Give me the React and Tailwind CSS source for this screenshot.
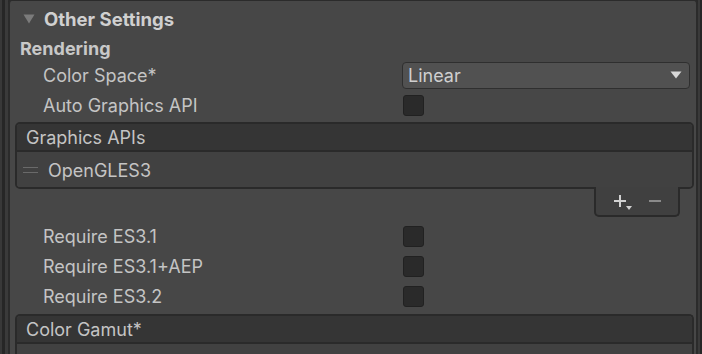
import React from "react";

function Checkbox() {
  return <div className="w-[21px] h-[21px] rounded-[3px] bg-[#2a2a2a] border border-[#212121]" />;
}

function Row({ label, children }) {
  return (
    <div className="h-[30px] flex items-center">
      <div className="w-[360px] pl-[33px] pt-[2px] text-[#c4c4c4]">{label}</div>
      <div className="flex-1 pl-[33px] pr-[6px]">{children}</div>
    </div>
  );
}

function ListHeader({ title }) {
  return (
    <div className="h-[28px] flex items-center px-[9px] pt-[2px] bg-[#353535] border-b-2 border-[#2a2a2a] text-[#c4c4c4]">
      {title}
    </div>
  );
}

export default function App() {
  return (
    <div
      className="w-[702px] h-[354px] flex overflow-hidden bg-[#2a2a2a] text-[18px] leading-none"
      style={{ fontFamily: "Inter, 'Noto Sans', sans-serif" }}
    >
      <div className="w-[2px] bg-[#383838]" />
      <div className="w-[3px] bg-[#262626]" />
      <div className="w-[3px] bg-[#3a3a3a]" />

      {/* Inspector panel */}
      <div className="flex-1 bg-[#474747] border-2 border-b-0 border-t border-[#2b2b2b] rounded-t-[4px] pt-[3px]">
        {/* Foldout header */}
        <div className="h-[30px] flex items-center pl-[13px]">
          <svg width="12" height="10" viewBox="0 0 12 10" className="mr-[9px]">
            <path d="M0.5 0.5 L11.5 0.5 L6 9.5 Z" fill="#7b7b7b" />
          </svg>
          <span className="font-bold text-[#d0d0d0] text-[18.5px] pt-[1px]">Other Settings</span>
        </div>

        <div className="h-[26px] flex items-center pl-[10px] pt-[4px] font-bold text-[#c8c8c8]">Rendering</div>

        <Row label="Color Space*">
          <div className="h-[27px] -ml-[1px] flex items-center justify-between pl-[5px] pr-[7px] bg-[#515151] border border-[#2f2f2f] rounded-[4px] text-[#cfcfcf]">
            <span className="pt-[1px]">Linear</span>
            <svg width="12" height="8" viewBox="0 0 12 8">
              <path d="M0.5 0.5 L11.5 0.5 L6 7.5 Z" fill="#d8d8d8" />
            </svg>
          </div>
        </Row>

        <Row label="Auto Graphics API">
          <Checkbox />
        </Row>

        {/* Graphics APIs reorderable list */}
        <div className="mt-[2px] ml-[5px] mr-[2px]">
          <div className="border-2 border-[#2a2a2a] rounded-[5px] overflow-hidden">
            <ListHeader title="Graphics APIs" />
            <div className="h-[35px] flex items-center bg-[#414141] pl-[6px] text-[#c4c4c4]">
              <div className="w-[15px] flex flex-col gap-[4px] mr-[10px] mt-[1px]">
                <div className="h-[1px] bg-[#6a6a6a]" />
                <div className="h-[1px] bg-[#6a6a6a]" />
              </div>
              <span className="pt-[2px]">OpenGLES3</span>
            </div>
          </div>
          <div className="flex justify-end pr-[14px]">
            <div className="w-[86px] h-[30px] -mt-[2px] flex items-center justify-around px-[6px] bg-[#404040] border-2 border-t-0 border-[#2a2a2a] rounded-b-[5px]">
              <div className="relative flex items-center">
                <svg width="14" height="14" viewBox="0 0 14 14">
                  <path d="M7 1 V13 M1 7 H13" stroke="#d2d2d2" strokeWidth="2" />
                </svg>
                <svg width="6" height="4" viewBox="0 0 6 4" className="absolute left-[13px] top-[12px]">
                  <path d="M0 0 H6 L3 4 Z" fill="#d2d2d2" />
                </svg>
              </div>
              <svg width="14" height="14" viewBox="0 0 14 14">
                <path d="M1 7 H13" stroke="#8a8a8a" strokeWidth="2" />
              </svg>
            </div>
          </div>
        </div>

        <div className="mt-[4px]">
          <Row label="Require ES3.1">
            <Checkbox />
          </Row>
          <Row label="Require ES3.1+AEP">
            <Checkbox />
          </Row>
          <Row label="Require ES3.2">
            <Checkbox />
          </Row>
        </div>

        <div className="mt-[3px] ml-[5px] mr-[2px] border-2 border-b-0 border-[#2a2a2a] rounded-t-[5px] overflow-hidden">
          <ListHeader title="Color Gamut*" />
          <div className="h-[20px] bg-[#414141]" />
        </div>
      </div>

      <div className="w-[2px] bg-[#3a3a3a]" />
      <div className="w-[2px] bg-[#262626]" />
    </div>
  );
}
